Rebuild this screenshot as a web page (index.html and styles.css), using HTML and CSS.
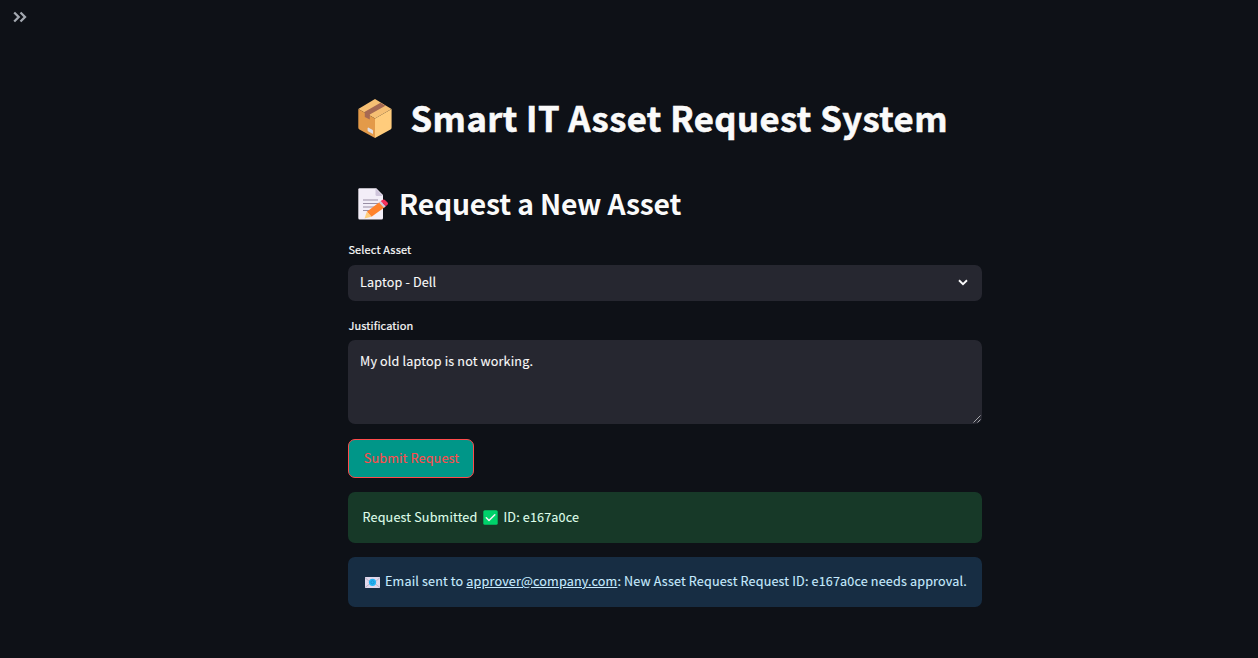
FILE: index.html
```html
<!DOCTYPE html>
<html lang="en">
<head>
<meta charset="utf-8">
<title>Smart IT Asset Request System</title>
<link rel="stylesheet" href="styles.css">
</head>
<body>
<header class="toolbar">
  <svg class="expand" viewBox="0 0 14 12" fill="none" stroke="#a3a8b0" stroke-width="2.300"><path d="M1.200 1.500 5.700 6l-4.500 4.500M7.500 1.500 12 6l-4.500 4.500"/></svg>
</header>
<main class="content">
  <h1 class="title">
    <svg class="package" viewBox="0 0 34 39">
      <path fill="#f6bf73" d="M17 0 33.500 10 17 19.500 .3 10z"/>
      <path fill="#e39a49" d="M.3 10 17 19.500V39L1.400 30.500Q.3 30 .3 28.500z"/>
      <path fill="#ffcc7c" d="M33.600 10 17 19.500V39l15.500-8.500q1.100-.6 1.100-2z"/>
      <path fill="#a56953" d="m22.500 3.800 4.900 2.900L11.800 15.600v5l-5-2.600v-5.200z"/>
      <path fill="#e1dfe4" d="m10.200 28.500 4.100 2.200q.7.4.7 1.100v3.300l-4.600-2.500q-.8-.4-.8-1.100v-2.600z"/>
    </svg>
    <span class="title-text">Smart IT Asset Request System</span>
  </h1>
  <h2 class="subtitle">
    <svg class="memo" viewBox="0 0 31 32">
      <path fill="#f3eef8" d="M1.5.3h16.8L25 7v23q0 1.5-1.5 1.5h-22Q.3 31.500.3 30V1.500Q.3.3 1.500.3z"/>
      <path fill="#cfc5db" d="M17.500.3 25 8h-6q-1.500 0-1.500-1.500z"/>
      <path stroke="#998ea4" stroke-width="1.100" d="M5 12h15M5 15.500h15M5 19h12M5 22.500h8"/>
      <path fill="#ff822d" d="m22 13.700 5 5.200-13.500 9.800-4.700-5z"/>
      <path fill="#ffce7c" d="m8.800 23.700 4.700 5-7 1.800z"/>
      <path fill="#d3c8dc" d="m21 14.600 1.900-1.700 5 5.300-2 1.500z"/>
      <path fill="#f8315c" d="m22.700 13 2-1.300q1.300-.8 2.500.5l2.400 2.400q1 1.200-.1 2.100l-1.800 1.500z"/>
    </svg>
    <span class="subtitle-text">Request a New Asset</span>
  </h2>
  <label class="label">Select Asset</label>
  <div class="field select">
    <span class="field-text">Laptop - Dell</span>
    <svg class="chevron" viewBox="0 0 10 7" fill="none" stroke="#fafafa" stroke-width="1.9"><path d="M1 1.300 5 5.200 9 1.300"/></svg>
  </div>
  <label class="label label-area">Justification</label>
  <div class="field area">
    <span class="field-text area-text">My old laptop is not working.</span>
    <svg class="grip" viewBox="0 0 8 8" stroke="#c8c8cc" stroke-width=".8"><path d="M.5 7.500 7.500.5M4.500 7.500 7.500 4.500"/></svg>
  </div>
  <button class="submit" type="button"><span class="submit-text">Submit Request</span></button>
  <div class="alert success">
    <span class="done-text">Request Submitted</span>
    <svg class="check" viewBox="0 0 15 15"><rect x=".3" y=".3" width="14.400" height="14.400" rx="1.500" fill="#00d26a"/><path fill="none" stroke="#f4f4f4" stroke-width="1.500" stroke-linecap="round" stroke-linejoin="round" d="M3.300 7.800 6 10.500l5.800-5.800"/></svg>
    <span class="id-text">ID: e167a0ce</span>
  </div>
  <div class="alert info">
    <svg class="mail" viewBox="0 0 15 11"><path fill="#e1d8ec" d="M0 0h15v11H0z"/><path fill="none" stroke="#b4acbc" stroke-width=".8" d="m0 .5 5 4.700M15 .5l-5 4.700M0 10.600l5-4M15 10.600l-5-4"/><circle cx="7.500" cy="5.300" r="3.600" fill="#26b5f5"/><circle cx="7.500" cy="5.300" r="1.600" fill="none" stroke="#1688c8" stroke-width=".7"/></svg>
    <span class="mail-text">Email sent to <a class="link">approver@company.com</a>: New Asset Request Request ID: e167a0ce needs approval.</span>
  </div>
</main>
</body>
</html>
```
FILE: styles.css
```css
* { box-sizing: border-box; }
body {
  margin: 0;
  height: 658px;
  overflow: hidden;
  background: #0e1117;
  color: #fafafa;
  font-family: "Noto Sans CJK SC", "Noto Sans", sans-serif;
  font-size: 12.6px;
  line-height: 20px;
  letter-spacing: 0.155px;
  -webkit-text-stroke: 0.1px;
  white-space: nowrap;
}
svg { display: block; flex: none; }
.toolbar { height: 92px; padding: 11px 13px; }
.expand { width: 14px; height: 12px; }
.content { display: flex; flex-direction: column; width: 634px; margin-left: 348px; }
.title, .subtitle { display: flex; align-items: center; margin: 0; padding-left: 10px; }
.title { height: 53px; font-size: 34.6px; line-height: 53px; font-weight: 700; letter-spacing: 0.45px; -webkit-text-stroke: 0.6px; }
.package { width: 34px; height: 39px; }
.title-text { margin-left: 18.6px; padding-bottom: 2px; }
.subtitle { height: 38px; margin-top: 40px; font-size: 28.3px; line-height: 38px; font-weight: 600; letter-spacing: -0.2px; -webkit-text-stroke: 0; }
.memo { width: 31px; height: 32px; margin-top: -1px; }
.subtitle-text { margin-left: 10px; padding-bottom: 2px; }
.label { height: 18px; margin-top: 17px; padding-left: 0.4px; font-size: 11px; line-height: 18px; letter-spacing: 0.13px; font-weight: 400; -webkit-text-stroke: 0.2px; }
.field { display: flex; background: #262730; border-radius: 7px; padding: 0 12px; }
.select { height: 36px; margin-top: 7px; align-items: center; justify-content: space-between; padding-right: 14px; }
.select .field-text { padding-bottom: 2px; }
.chevron { width: 10px; height: 7px; margin-bottom: 1px; }
.label-area { margin-top: 15px; }
.area { height: 84px; margin-top: 6px; padding: 11px 1px 1px 12px; justify-content: space-between; }
.grip { width: 8px; height: 8px; align-self: flex-end; }
.submit {
  width: 126px; height: 39px; margin-top: 15px; padding: 0 0 2px 1px;
  border: 1px solid #ff4b4b; border-radius: 7px;
  background: #009688; color: #ff4b4b; font: inherit; letter-spacing: inherit;
}
.alert { display: flex; align-items: center; border-radius: 7px; padding-left: 14.5px; }
.alert span { padding-bottom: 2px; }
.success { height: 51px; margin-top: 14px; background: #173928; color: #dffde9; }
.check { width: 15px; height: 15px; margin: 0 5px 1px 6px; }
.info { height: 50px; margin-top: 14px; padding-left: 17px; background: #172d43; color: #c7ebff; }
.mail { width: 15px; height: 11px; margin-top: 1px; margin-right: 5px; }
.link { text-decoration: underline; }
```
